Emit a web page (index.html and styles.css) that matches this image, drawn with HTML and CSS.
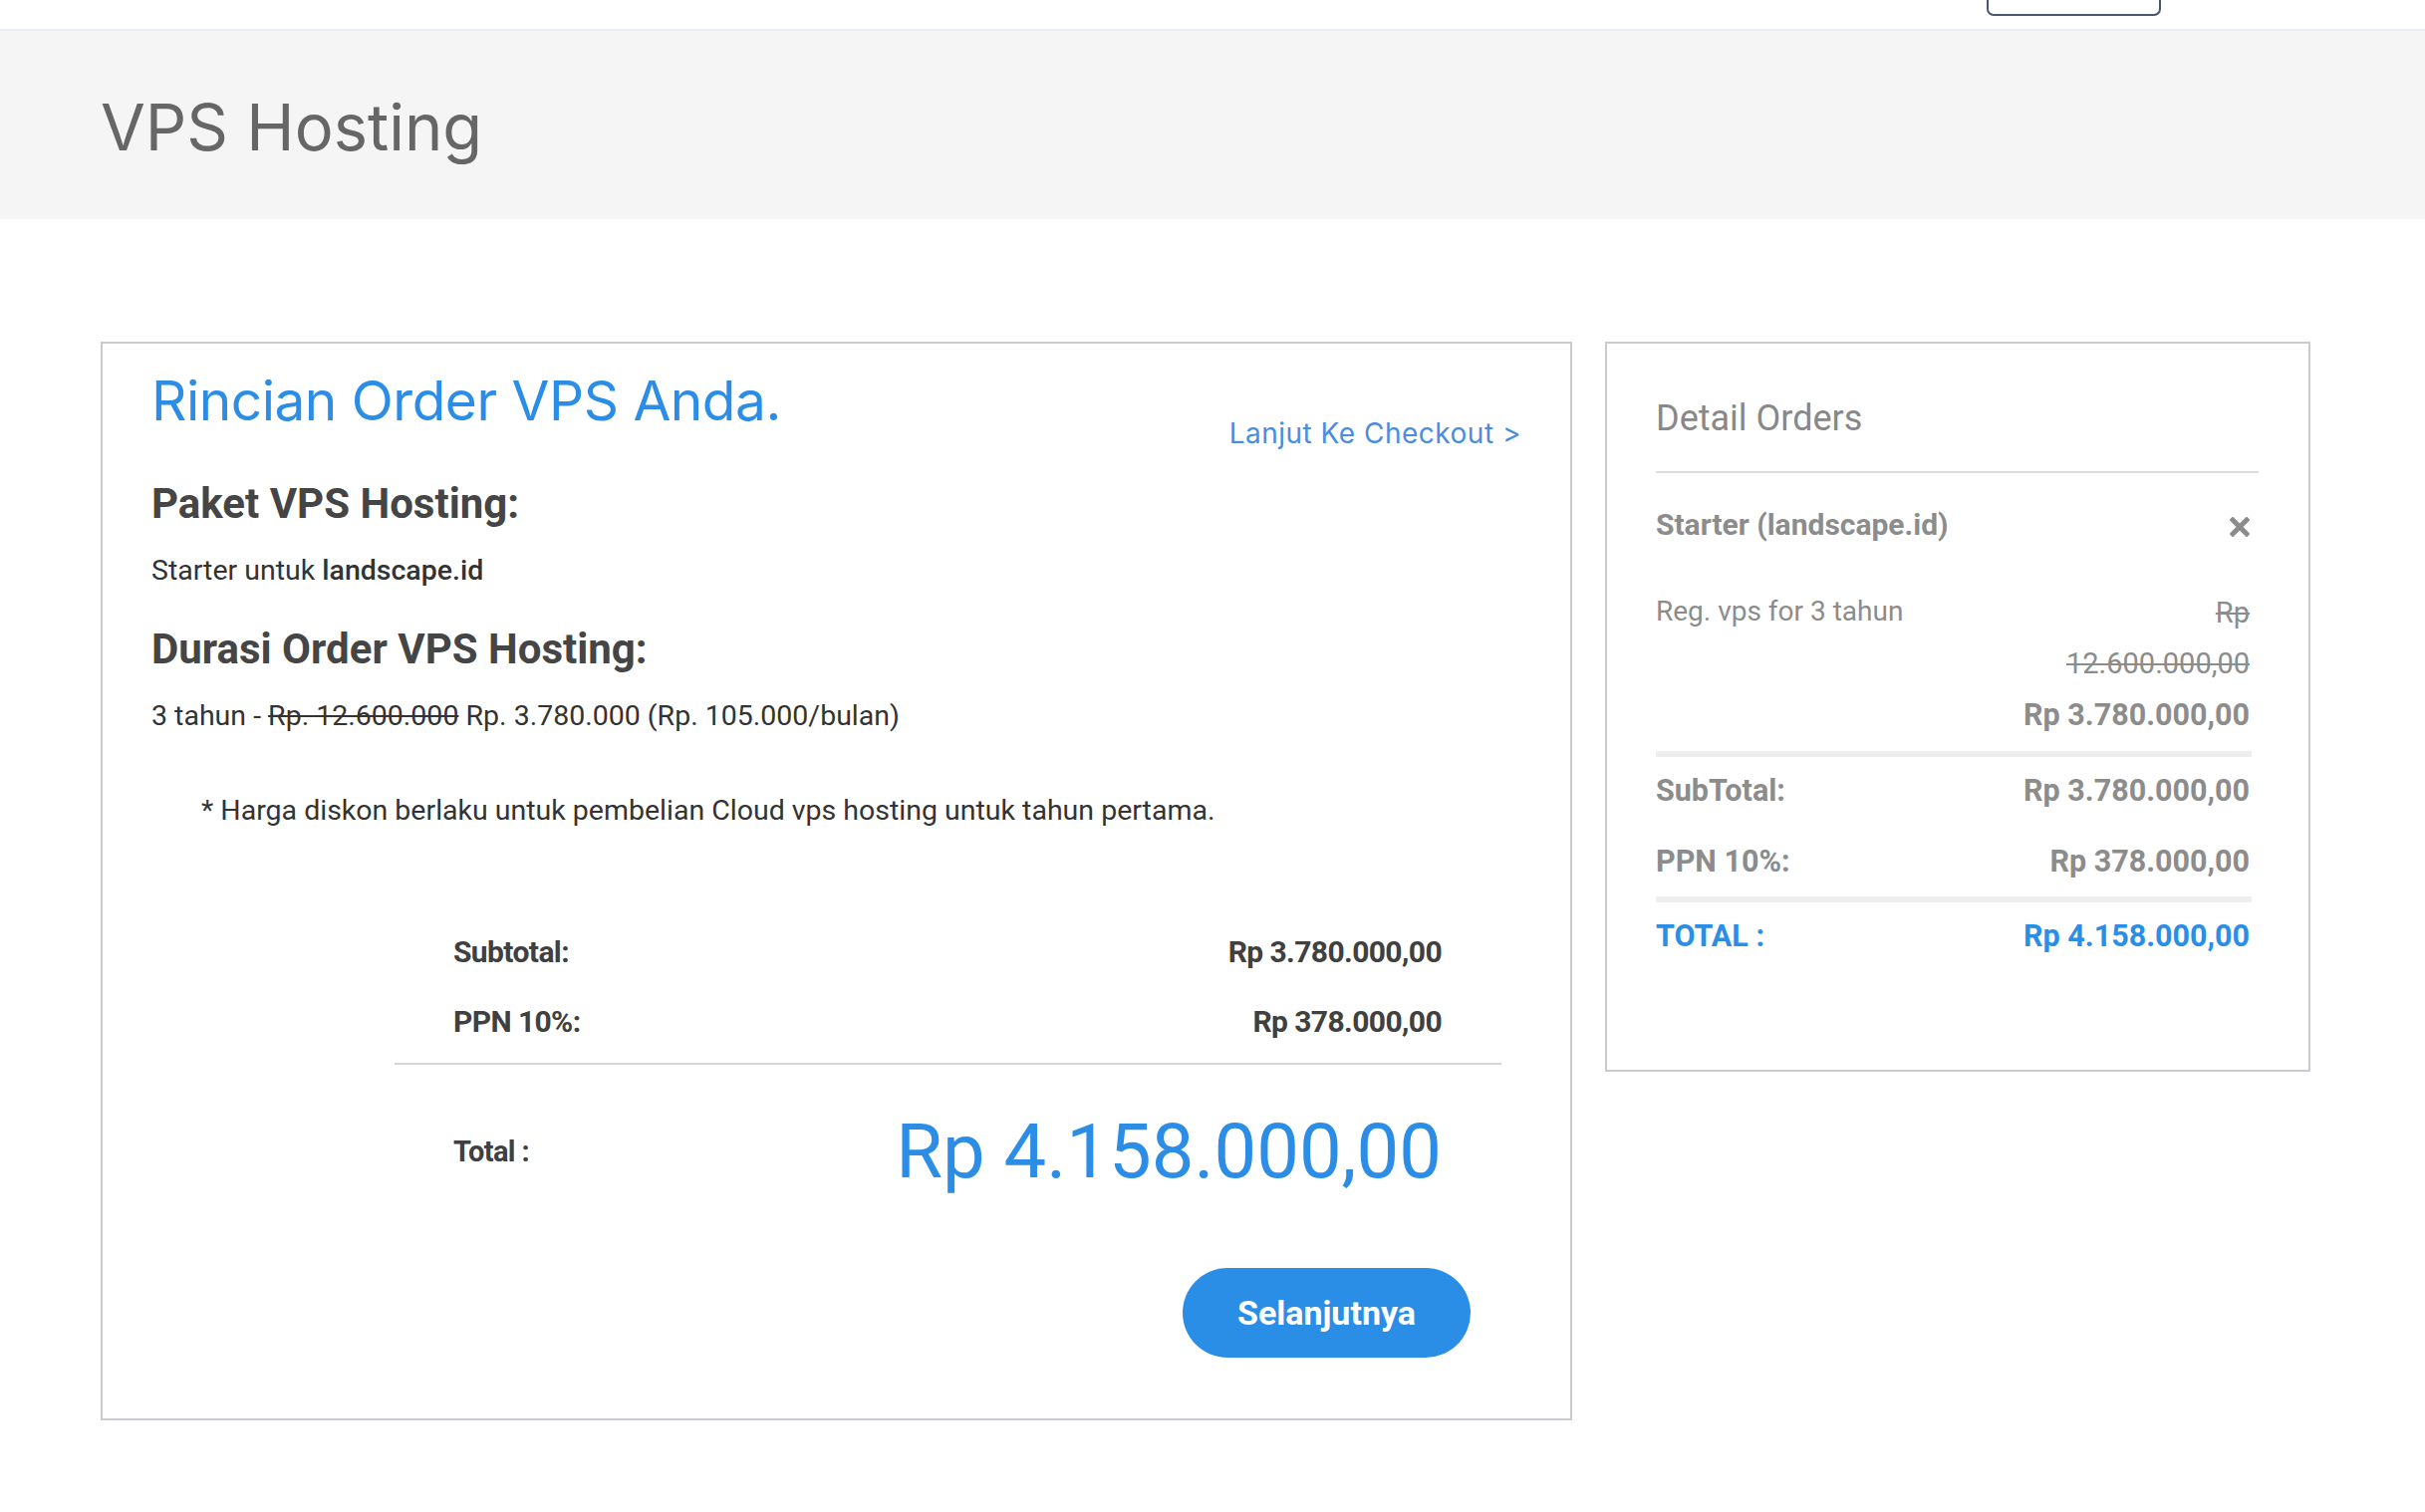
FILE: index.html
```html
<!DOCTYPE html>
<html lang="id">
<head>
<meta charset="utf-8">
<title>VPS Hosting</title>
<link rel="stylesheet" href="styles.css">
</head>
<body>
<div class="topbar">
  <div class="top-btn"></div>
</div>
<header class="page-head">
  <h1>VPS Hosting</h1>
</header>
<main class="wrap">
  <section class="order-box">
    <div class="title-row">
      <h2 class="order-title">Rincian Order VPS Anda.</h2>
      <a class="checkout-link" href="#">Lanjut Ke Checkout &gt;</a>
    </div>
    <h3 class="sec-head first">Paket VPS Hosting:</h3>
    <p class="line">Starter untuk <strong>landscape.id</strong></p>
    <h3 class="sec-head">Durasi Order VPS Hosting:</h3>
    <p class="line">3 tahun - <del>Rp. 12.600.000</del> Rp. 3.780.000 (Rp. 105.000/bulan)</p>
    <p class="line note">* Harga diskon berlaku untuk pembelian Cloud vps hosting untuk tahun pertama.</p>
    <div class="summary">
      <div class="sum-row"><span>Subtotal:</span><span>Rp 3.780.000,00</span></div>
      <div class="sum-row ppn"><span>PPN 10%:</span><span>Rp 378.000,00</span></div>
      <div class="sum-total"><span class="t-label">Total :</span><span class="t-value">Rp 4.158.000,00</span></div>
    </div>
    <div class="actions">
      <button class="next-btn" type="button">Selanjutnya</button>
    </div>
  </section>
  <aside class="detail-box">
    <h4 class="detail-title">Detail Orders</h4>
    <div class="item-row">
      <span class="item-name">Starter (landscape.id)</span>
      <svg class="remove" width="20" height="20" viewBox="0 0 20 20" aria-hidden="true"><path d="M3 3 L17 17 M17 3 L3 17" stroke="#8c8c8c" stroke-width="5" stroke-linecap="square" fill="none"/></svg>
    </div>
    <div class="reg-row">
      <span class="reg-label">Reg. vps for 3 tahun</span>
      <span class="reg-price"><del>Rp<br>12.600.000,00</del><br><b>Rp 3.780.000,00</b></span>
    </div>
    <div class="thick"></div>
    <div class="d-row sub"><span>SubTotal:</span><span>Rp 3.780.000,00</span></div>
    <div class="d-row ppn2"><span>PPN 10%:</span><span>Rp 378.000,00</span></div>
    <div class="thick second"></div>
    <div class="d-row total"><span>TOTAL :</span><span>Rp 4.158.000,00</span></div>
  </aside>
</main>
</body>
</html>
```
FILE: styles.css
```css
html, body {
  margin: 0;
  padding: 0;
  background: #ffffff;
}
body {
  font-family: Roboto, "Liberation Sans", Arial, sans-serif;
  color: #333333;
  width: 2434px;
  min-height: 1518px;
}
.topbar {
  height: 29px;
  border-bottom: 2px solid #e8edf2;
  display: flex;
  justify-content: flex-end;
  padding-right: 265px;
}
.top-btn {
  width: 171px;
  height: 14px;
  border: 2px solid #4a5670;
  border-top: none;
  border-radius: 0 0 7px 7px;
}
.page-head {
  background: #f5f5f5;
  height: 189px;
  display: flex;
  align-items: center;
  padding-left: 101px;
}
.page-head h1 {
  margin: 0;
  font-family: Inter, "Open Sans", sans-serif;
  font-weight: 400;
  font-size: 65px;
  color: #666666;
  line-height: 1;
  padding-top: 4px;
}
.wrap {
  display: flex;
  align-items: flex-start;
  gap: 33px;
  margin: 123px 0 0 101px;
}
.order-box {
  width: 1477px;
  box-sizing: border-box;
  border: 2px solid #c8ccd1;
  padding: 24px 49px 61px 49px;
}
.title-row {
  display: flex;
  justify-content: space-between;
  align-items: flex-start;
}
.order-title {
  margin: 0;
  font-family: Inter, "Open Sans", sans-serif;
  font-weight: 400;
  font-size: 55px;
  line-height: 66px;
  color: #2b8de6;
  letter-spacing: -0.5px;
}
.checkout-link {
  margin-top: 49px;
  font-family: Inter, "Open Sans", sans-serif;
  font-size: 28px;
  line-height: 34px;
  color: #4a8ddf;
  text-decoration: none;
  letter-spacing: 0.5px;
}
.sec-head {
  margin: 34px 0 0 0;
  font-size: 42px;
  line-height: 50px;
  font-weight: 700;
  color: #454545;
}
.sec-head.first {
  margin-top: 29px;
}
.line {
  margin: 22px 0 0 0;
  font-size: 28.5px;
  line-height: 40px;
  color: #333333;
}
.line strong {
  font-weight: 500;
}
.line del {
  text-decoration: line-through;
}
.line.note {
  margin-top: 55px;
  padding-left: 50px;
}
.summary {
  margin: 102px 20px 0 244px;
}
.sum-row {
  display: flex;
  justify-content: space-between;
  padding: 0 60px 0 59px;
  font-size: 30px;
  line-height: 40px;
  font-weight: 700;
  color: #404040;
  letter-spacing: -0.6px;
}
.sum-row.ppn {
  margin-top: 30px;
  padding-bottom: 21px;
  border-bottom: 2px solid #d6d6d6;
}
.sum-total {
  display: flex;
  justify-content: space-between;
  align-items: center;
  margin-top: 42px;
  padding: 0 60px 0 59px;
  height: 90px;
}
.t-label {
  font-size: 29px;
  font-weight: 700;
  color: #404040;
  letter-spacing: -0.6px;
}
.t-value {
  font-size: 76px;
  font-weight: 400;
  color: #2b8de6;
}
.actions {
  display: flex;
  justify-content: flex-end;
  margin-top: 72px;
  padding-right: 51px;
}
.next-btn {
  width: 289px;
  height: 90px;
  border: none;
  border-radius: 45px;
  background: #2b8ee6;
  color: #ffffff;
  font-family: Roboto, "Liberation Sans", sans-serif;
  font-weight: 700;
  font-size: 34px;
  cursor: pointer;
}
.detail-box {
  width: 708px;
  box-sizing: border-box;
  border: 2px solid #c8ccd1;
  padding: 53px 50px 114px 49px;
  color: #8c8c8c;
}
.detail-title {
  margin: 0;
  font-size: 36px;
  line-height: 44px;
  font-weight: 400;
  color: #888888;
  padding-bottom: 31px;
  border-bottom: 2px solid #dddddd;
}
.item-row {
  display: flex;
  justify-content: space-between;
  align-items: center;
  margin-top: 34px;
  padding-right: 9px;
  font-size: 30px;
  line-height: 36px;
  font-weight: 700;
}
.remove {
  display: block;
  margin-top: 4px;
}
.reg-row {
  display: flex;
  justify-content: space-between;
  align-items: flex-start;
  margin-top: 45px;
  padding-right: 9px;
  font-size: 28px;
  line-height: 51px;
}
.reg-label {
  line-height: 48px;
}
.reg-price {
  text-align: right;
  font-size: 29px;
}
.reg-price del {
  text-decoration: line-through;
}
.reg-price b {
  font-weight: 700;
  font-size: 30.5px;
}
.thick {
  height: 6px;
  background: #eeeeee;
  margin: 10px 7px 0 0;
}
.thick.second {
  margin-top: 15px;
}
.d-row {
  display: flex;
  justify-content: space-between;
  margin-right: 9px;
  font-size: 30.5px;
  line-height: 40px;
  font-weight: 700;
}
.d-row.sub {
  margin-top: 14px;
}
.d-row.ppn2 {
  margin-top: 31px;
}
.d-row.total {
  margin-top: 14px;
  color: #2b8ee6;
}
```
